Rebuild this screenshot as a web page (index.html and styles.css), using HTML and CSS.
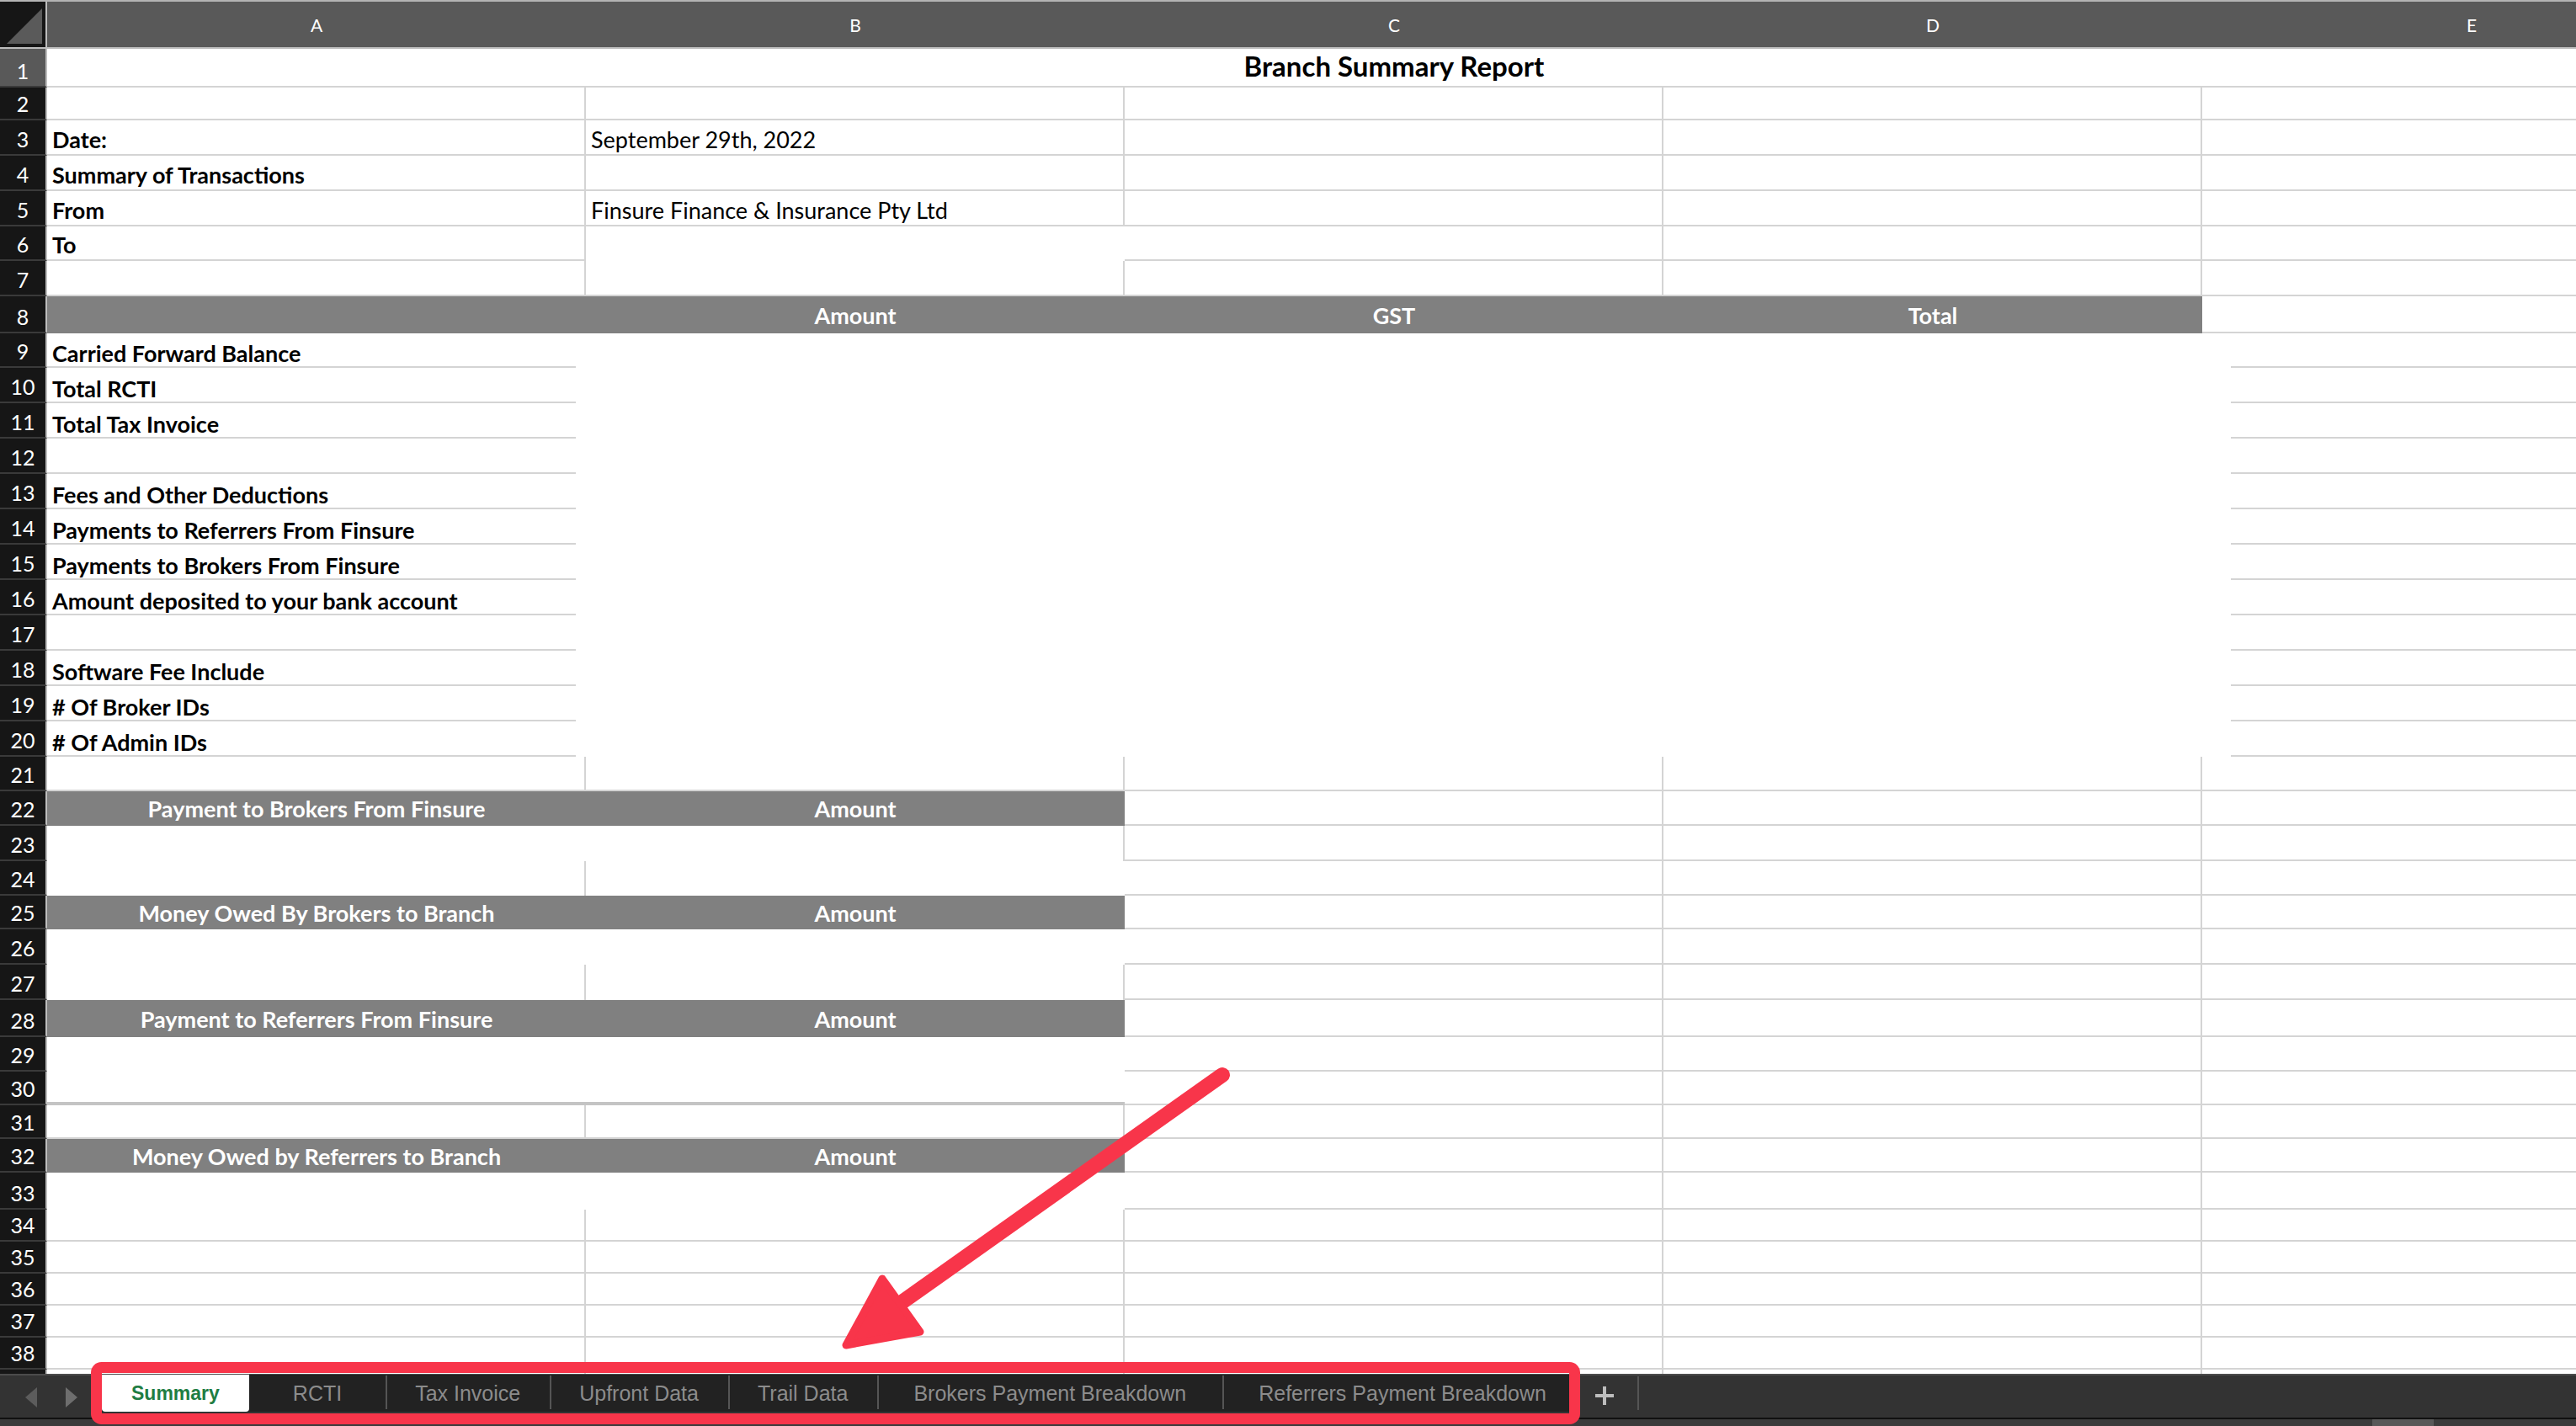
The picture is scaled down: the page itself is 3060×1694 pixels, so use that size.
FILE: index.html
```html
<!DOCTYPE html>
<html lang="en">
<head>
<meta charset="utf-8">
<title>Branch Summary Report</title>
<link rel="stylesheet" href="styles.css">
</head>
<body>
<div class="page">
  <div class="sheet">
    <div class="colhead">
      <div class="corner"><svg width="54" height="54" viewBox="0 0 54 54"><polygon points="8,50 50,8 50,50" fill="#5a5a5a"/></svg></div>
      <div class="ch">A</div><div class="ch">B</div><div class="ch">C</div><div class="ch">D</div><div class="ch">E</div>
    </div>

    <div class="row h46"><div class="rn sel">1</div><div class="title">Branch Summary Report</div></div>
    <div class="row h39"><div class="rn">2</div><div class="c"></div><div class="c"></div><div class="c"></div><div class="c"></div><div class="c"></div></div>
    <div class="row"><div class="rn">3</div><div class="c b">Date:</div><div class="c">September 29th, 2022</div><div class="c"></div><div class="c"></div><div class="c"></div></div>
    <div class="row"><div class="rn">4</div><div class="c b">Summary of Transactions</div><div class="c"></div><div class="c"></div><div class="c"></div><div class="c"></div></div>
    <div class="row"><div class="rn">5</div><div class="c b">From</div><div class="c">Finsure Finance &amp; Insurance Pty Ltd</div><div class="c"></div><div class="c"></div><div class="c"></div></div>
    <div class="row h41"><div class="rn">6</div><div class="c b">To</div><div class="c nb nr"></div><div class="c"></div><div class="c"></div><div class="c"></div></div>
    <div class="row"><div class="rn">7</div><div class="c"></div><div class="c"></div><div class="c"></div><div class="c"></div><div class="c"></div></div>
    <div class="row h44"><div class="rn">8</div><div class="c hd"></div><div class="c hd">Amount</div><div class="c hd">GST</div><div class="c hd">Total</div><div class="c"></div></div>

    <div class="row h41"><div class="rn">9</div><div class="c b ashort">Carried Forward Balance</div><div class="c x"></div><div class="c x"></div><div class="c x"></div><div class="c eshort"></div></div>
    <div class="row"><div class="rn">10</div><div class="c b ashort">Total RCTI</div><div class="c x"></div><div class="c x"></div><div class="c x"></div><div class="c eshort"></div></div>
    <div class="row"><div class="rn">11</div><div class="c b ashort">Total Tax Invoice</div><div class="c x"></div><div class="c x"></div><div class="c x"></div><div class="c eshort"></div></div>
    <div class="row"><div class="rn">12</div><div class="c b ashort"></div><div class="c x"></div><div class="c x"></div><div class="c x"></div><div class="c eshort"></div></div>
    <div class="row"><div class="rn">13</div><div class="c b ashort">Fees and Other Deductions</div><div class="c x"></div><div class="c x"></div><div class="c x"></div><div class="c eshort"></div></div>
    <div class="row"><div class="rn">14</div><div class="c b ashort">Payments to Referrers From Finsure</div><div class="c x"></div><div class="c x"></div><div class="c x"></div><div class="c eshort"></div></div>
    <div class="row"><div class="rn">15</div><div class="c b ashort">Payments to Brokers From Finsure</div><div class="c x"></div><div class="c x"></div><div class="c x"></div><div class="c eshort"></div></div>
    <div class="row"><div class="rn">16</div><div class="c b ashort">Amount deposited to your bank account</div><div class="c x"></div><div class="c x"></div><div class="c x"></div><div class="c eshort"></div></div>
    <div class="row"><div class="rn">17</div><div class="c b ashort"></div><div class="c x"></div><div class="c x"></div><div class="c x"></div><div class="c eshort"></div></div>
    <div class="row"><div class="rn">18</div><div class="c b ashort">Software Fee Include</div><div class="c x"></div><div class="c x"></div><div class="c x"></div><div class="c eshort"></div></div>
    <div class="row"><div class="rn">19</div><div class="c b ashort"># Of Broker IDs</div><div class="c x"></div><div class="c x"></div><div class="c x"></div><div class="c eshort"></div></div>
    <div class="row"><div class="rn">20</div><div class="c b ashort"># Of Admin IDs</div><div class="c x"></div><div class="c x"></div><div class="c x"></div><div class="c eshort"></div></div>
    <div class="row h41"><div class="rn">21</div><div class="c"></div><div class="c"></div><div class="c"></div><div class="c"></div><div class="c"></div></div>

    <div class="row h41"><div class="rn">22</div><div class="c hd">Payment to Brokers From Finsure</div><div class="c hd">Amount</div><div class="c"></div><div class="c"></div><div class="c"></div></div>
    <div class="row"><div class="rn">23</div><div class="c x"></div><div class="c nb"></div><div class="c"></div><div class="c"></div><div class="c"></div></div>
    <div class="row h41"><div class="rn">24</div><div class="c nb"></div><div class="c x"></div><div class="c"></div><div class="c"></div><div class="c"></div></div>
    <div class="row h40"><div class="rn">25</div><div class="c hd">Money Owed By Brokers to Branch</div><div class="c hd">Amount</div><div class="c"></div><div class="c"></div><div class="c"></div></div>
    <div class="row"><div class="rn">26</div><div class="c x"></div><div class="c x"></div><div class="c"></div><div class="c"></div><div class="c"></div></div>
    <div class="row"><div class="rn">27</div><div class="c nb"></div><div class="c nb"></div><div class="c"></div><div class="c"></div><div class="c"></div></div>
    <div class="row h44"><div class="rn">28</div><div class="c hd">Payment to Referrers From Finsure</div><div class="c hd">Amount</div><div class="c"></div><div class="c"></div><div class="c"></div></div>
    <div class="row h41"><div class="rn">29</div><div class="c x"></div><div class="c x"></div><div class="c"></div><div class="c"></div><div class="c"></div></div>
    <div class="row h40"><div class="rn">30</div><div class="c x thick"></div><div class="c x thick"></div><div class="c"></div><div class="c"></div><div class="c"></div></div>
    <div class="row h40"><div class="rn">31</div><div class="c"></div><div class="c"></div><div class="c"></div><div class="c"></div><div class="c"></div></div>
    <div class="row h40"><div class="rn">32</div><div class="c hd">Money Owed by Referrers to Branch</div><div class="c hd">Amount</div><div class="c"></div><div class="c"></div><div class="c"></div></div>
    <div class="row h44"><div class="rn">33</div><div class="c x"></div><div class="c x"></div><div class="c"></div><div class="c"></div><div class="c"></div></div>
    <div class="row h38"><div class="rn">34</div><div class="c"></div><div class="c"></div><div class="c"></div><div class="c"></div><div class="c"></div></div>
    <div class="row h38"><div class="rn">35</div><div class="c"></div><div class="c"></div><div class="c"></div><div class="c"></div><div class="c"></div></div>
    <div class="row h38"><div class="rn">36</div><div class="c"></div><div class="c"></div><div class="c"></div><div class="c"></div><div class="c"></div></div>
    <div class="row h38"><div class="rn">37</div><div class="c"></div><div class="c"></div><div class="c"></div><div class="c"></div><div class="c"></div></div>
    <div class="row h38"><div class="rn">38</div><div class="c"></div><div class="c"></div><div class="c"></div><div class="c"></div><div class="c"></div></div>
    <div class="row h5"><div class="rn"></div><div class="c nb"></div><div class="c nb"></div><div class="c nb"></div><div class="c nb"></div><div class="c nb"></div></div>
  </div>

  <div class="tabbar">
    <div class="nav">
      <svg width="121" height="52" viewBox="0 0 121 52"><polygon points="30,28 44,16 44,40" fill="#5c5c5c"/><polygon points="78,16 92,28 78,40" fill="#6e6e6e"/></svg>
    </div>
    <div class="tabs">
      <div class="tab active">Summary</div>
      <div class="tab after-active rcti">RCTI</div>
      <div class="tab">Tax Invoice</div>
      <div class="tab">Upfront Data</div>
      <div class="tab">Trail Data</div>
      <div class="tab wide">Brokers Payment Breakdown</div>
      <div class="tab wide">Referrers Payment Breakdown</div>
    </div>
    <div class="add"><svg width="22" height="22" viewBox="0 0 22 22"><rect x="9" y="0" width="4" height="22" fill="#bdbdbd"/><rect x="0" y="9" width="22" height="4" fill="#bdbdbd"/></svg></div>
    <div class="rest"></div>
  </div>
  <div class="strip"><div class="thumb"></div></div>

  <svg class="annot" width="3060" height="1694" viewBox="0 0 3060 1694">
    <rect x="114.5" y="1624.5" width="1756" height="61" rx="6" ry="6" fill="none" stroke="#f8354a" stroke-width="13"/>
    <line x1="1452" y1="1277" x2="1060" y2="1555" stroke="#f8354a" stroke-width="18" stroke-linecap="round"/>
    <polygon points="1005,1598 1048,1519 1093,1582" fill="#f8354a" stroke="#f8354a" stroke-width="9" stroke-linejoin="round"/>
  </svg>
</div>
</body>
</html>
```
FILE: styles.css
```css
html, body {
  margin: 0;
  padding: 0;
  background: #ffffff;
}

.page {
  position: relative;
  width: 3060px;
  height: 1694px;
  overflow: hidden;
  font-family: Lato, "Open Sans", sans-serif;
}

.sheet {
  width: 3060px;
  overflow: hidden;
}

.colhead {
  display: grid;
  grid-template-columns: 56px repeat(5, 640px);
  height: 58px;
  box-sizing: border-box;
  border-top: 2px solid #b4b4b4;
  border-bottom: 2px solid #bdbdbd;
  background: #595959;
}

.corner {
  background: #161616;
  border-right: 2px solid #bdbdbd;
  box-sizing: border-box;
}

.corner svg {
  display: block;
}

.ch {
  color: #ffffff;
  font-size: 21px;
  display: flex;
  align-items: center;
  justify-content: center;
}

.row {
  display: grid;
  grid-template-columns: 56px repeat(5, 640px);
  height: 42px;
}

.h5 { height: 5px; }
.h38 { height: 38px; }
.h39 { height: 39px; }
.h40 { height: 40px; }
.h41 { height: 41px; }
.h44 { height: 44px; }
.h46 { height: 46px; }

.rn {
  background: #161616;
  color: #ffffff;
  font-size: 25px;
  line-height: 1;
  box-sizing: border-box;
  border-right: 2px solid #bdbdbd;
  border-bottom: 2px solid #3a3a3a;
  display: flex;
  align-items: flex-end;
  justify-content: center;
  padding-bottom: 5px;
}

.rn.sel {
  background: #595959;
}

.title {
  grid-column: span 5;
  box-sizing: border-box;
  border-bottom: 2px solid #d4d4d4;
  display: flex;
  align-items: flex-end;
  justify-content: center;
  font-size: 33px;
  font-weight: 700;
  line-height: 1;
  padding-bottom: 7px;
  color: #000000;
}

.c {
  box-sizing: border-box;
  border-right: 2px solid #d4d4d4;
  border-bottom: 2px solid #d4d4d4;
  display: flex;
  align-items: flex-end;
  padding: 0 0 4px 6px;
  font-size: 27px;
  line-height: 1;
  white-space: nowrap;
  color: #000000;
}

.b { font-weight: 700; }

.nb { border-bottom: none; }
.nr { border-right: none; }
.x { border: none; }

.thick {
  border-bottom: 4px solid #c4c4c4;
}

.ashort {
  border: none;
  background: linear-gradient(#d4d4d4, #d4d4d4) left bottom / 628px 2px no-repeat;
}

.eshort {
  border: none;
  background: linear-gradient(#d4d4d4, #d4d4d4) right bottom / calc(100% - 34px) 2px no-repeat;
}

.hd {
  border: none;
  background: #808080;
  color: #ffffff;
  font-weight: 700;
  justify-content: center;
  align-items: center;
  padding: 0;
}

/* sheet tabs */
.tabbar {
  display: flex;
  height: 52px;
  background: #333333;
  box-shadow: inset 0 2px 0 #4b4b4b;
  font-family: "Liberation Sans", Arial, Helvetica, sans-serif;
}

.nav {
  width: 121px;
  flex: none;
}

.nav svg {
  display: block;
}

.tabs {
  display: flex;
  margin-top: 1px;
  height: 44px;
  background: #222222;
  width: 1743px;
  flex: none;
}

.tab {
  position: relative;
  display: flex;
  align-items: center;
  justify-content: center;
  padding: 0 35px;
  font-size: 25px;
  color: #8c8c8c;
  white-space: nowrap;
}

.tab::before {
  content: "";
  position: absolute;
  left: 0;
  top: 1px;
  bottom: 3px;
  width: 2px;
  background: #555555;
}

.tab.active::before,
.tab.after-active::before {
  display: none;
}

.tab.active {
  background: #ffffff;
  color: #1f7d43;
  font-weight: 700;
  font-size: 23px;
  border-radius: 0 0 4px 4px;
  padding: 0 35px;
  width: 176px;
  box-sizing: border-box;
}

.tab.rcti {
  padding: 0 52px;
}

.tab.wide {
  padding: 0 43px;
}

.add {
  width: 83px;
  flex: none;
  display: flex;
  align-items: center;
  justify-content: center;
  position: relative;
}

.add svg {
  display: block;
}

.add::after {
  content: "";
  position: absolute;
  right: 0;
  top: 3px;
  bottom: 9px;
  width: 2px;
  background: #555555;
}

.rest {
  flex: 1;
}

.strip {
  position: relative;
  height: 10px;
  box-sizing: border-box;
  border-top: 2px solid #111111;
  background: #3b3b3b;
}

.thumb {
  position: absolute;
  left: 2818px;
  top: 0;
  width: 73px;
  height: 8px;
  background: #585858;
}

.annot {
  position: absolute;
  left: 0;
  top: 0;
  pointer-events: none;
}
```
